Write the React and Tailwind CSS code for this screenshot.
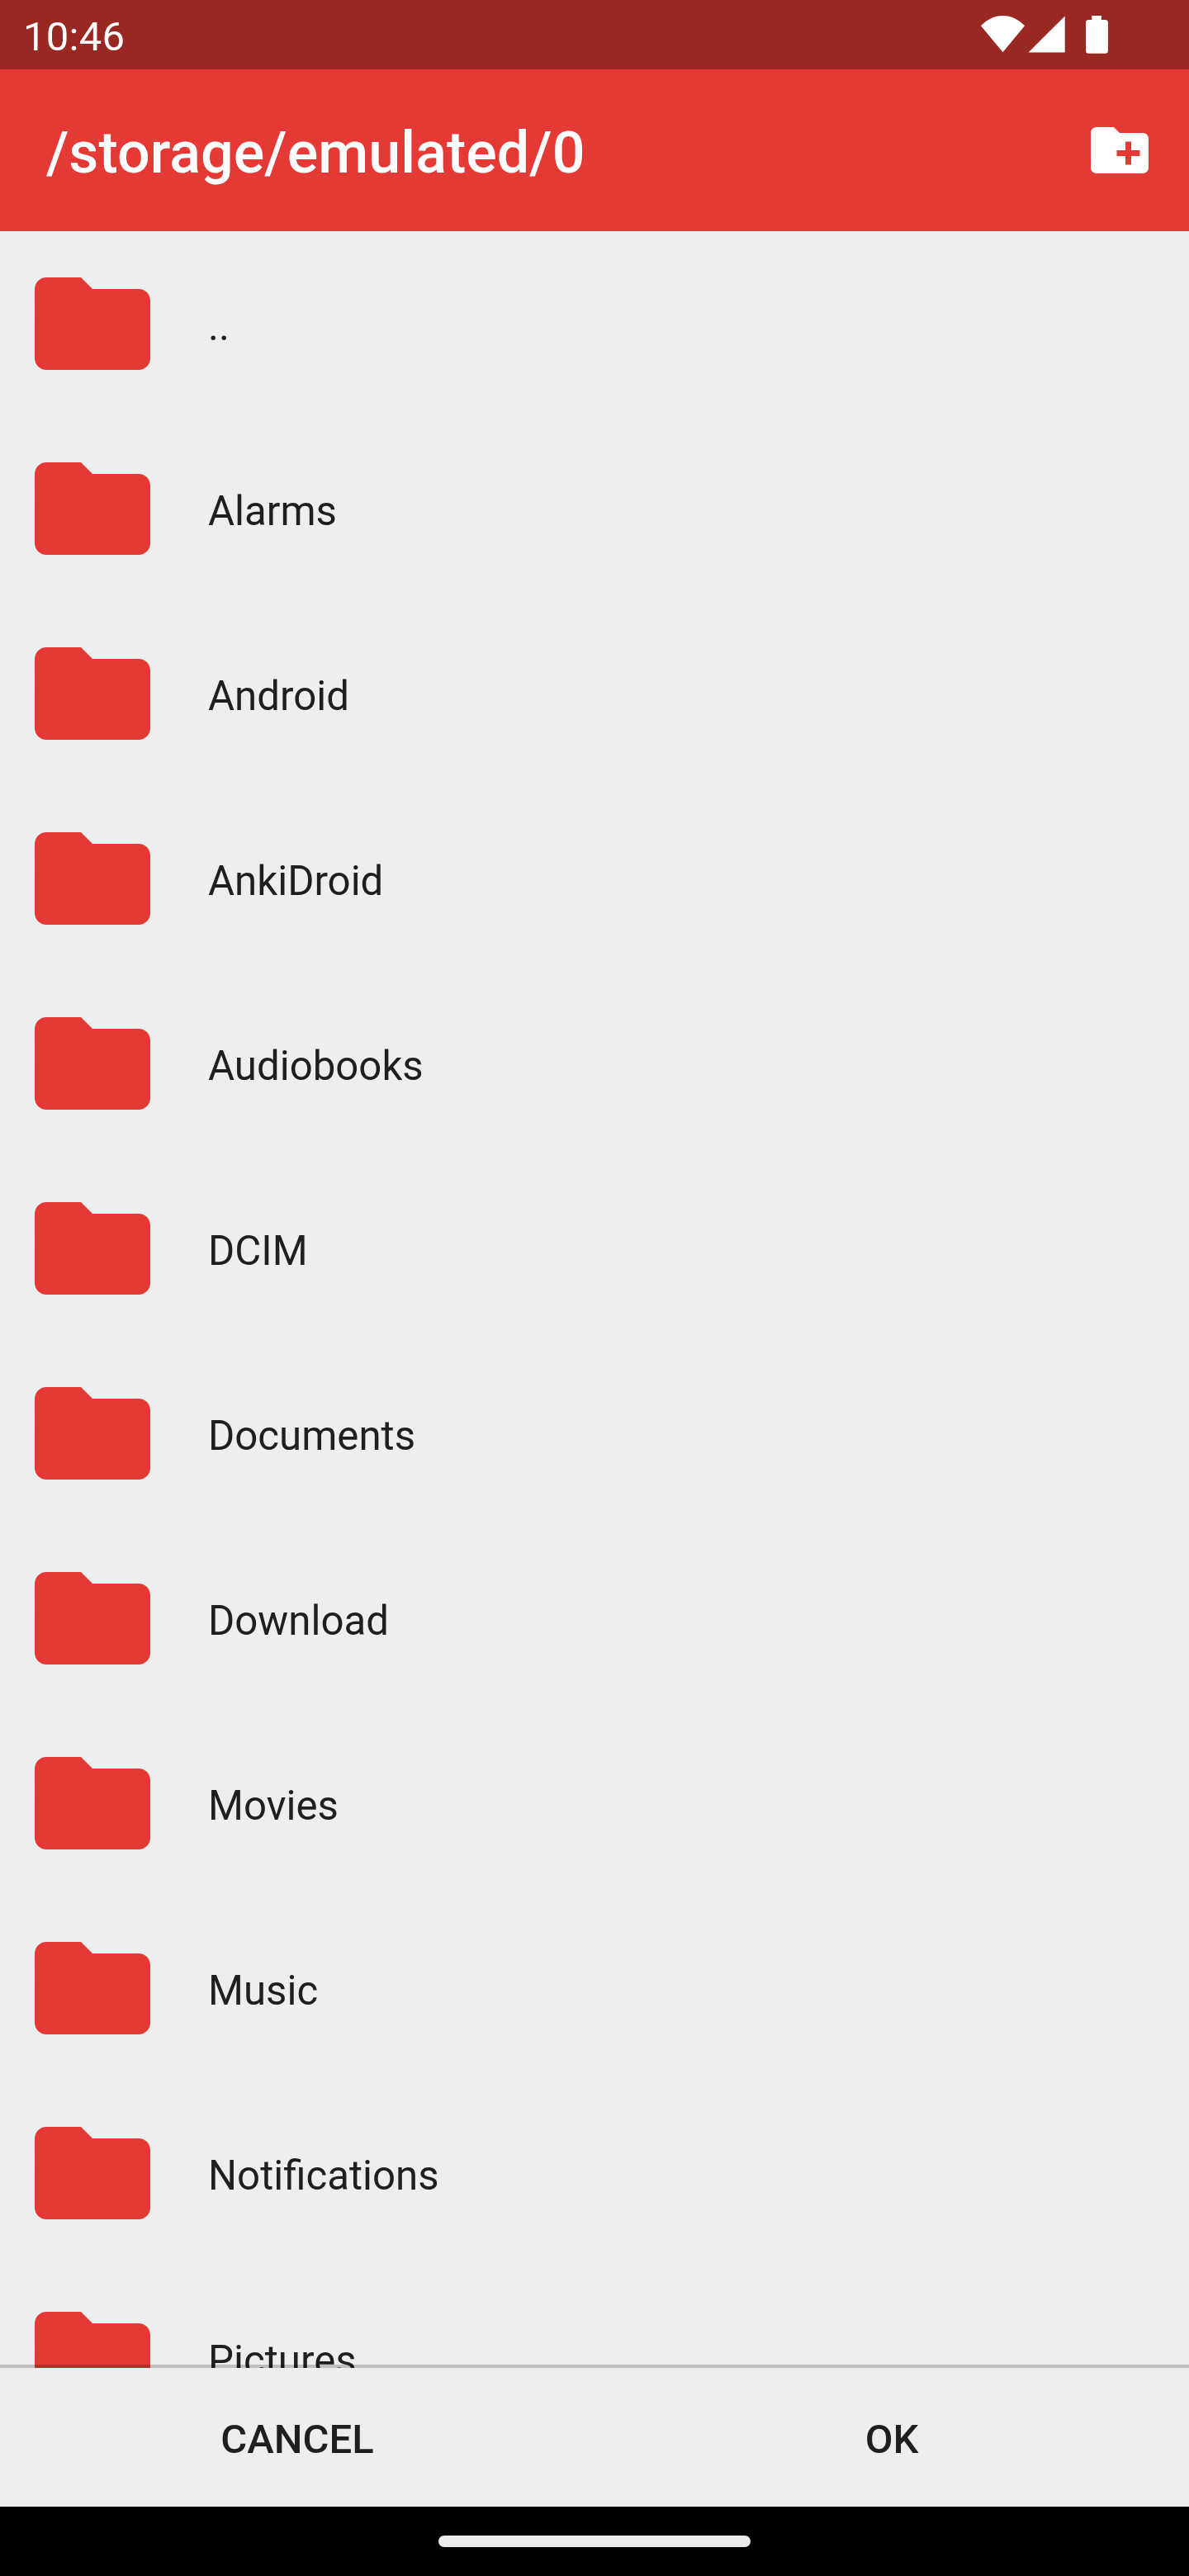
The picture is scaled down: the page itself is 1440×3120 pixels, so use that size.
const folders = [
  "..", "Alarms", "Android", "AnkiDroid", "Audiobooks", "DCIM",
  "Documents", "Download", "Movies", "Music", "Notifications", "Pictures",
];

function StatusBar() {
  return (
    <div className="flex h-[84px] shrink-0 items-center justify-between bg-[#992822] pl-7 text-white">
      <span className="pt-1.5 text-[49px] leading-[58px] tracking-[0.25px]">10:46</span>
      <svg className="h-[84px] w-[280px]" viewBox="1160 0 280 84" fill="currentColor">
        <path d="M1188 31.3C1195.500 23.500 1204.500 19 1214.500 19s19 4.500 26.500 12.300L1214.500 63.300z" />
        <path d="M1289.700 19.500v44H1245.500z" />
        <path d="M1322.300 19h11.700v5h4.500a3.500 3.500 0 0 1 3.500 3.500v33.700a3.500 3.500 0 0 1-3.500 3.500h-20a3.500 3.500 0 0 1-3.500-3.500V27.500a3.500 3.500 0 0 1 3.500-3.500h3.800z" />
      </svg>
    </div>
  );
}

function FolderIcon() {
  return (
    <svg className="size-[168px] shrink-0" viewBox="0 0 24 24" fill="#e53935">
      <path d="M10 4H4c-1.100 0-1.990.9-1.990 2L2 18c0 1.100.9 2 2 2h16c1.100 0 2-.9 2-2V8c0-1.100-.9-2-2-2h-8l-2-2z" />
    </svg>
  );
}

function Toolbar() {
  return (
    <header className="flex h-[196px] shrink-0 items-center justify-between bg-[#e53935] pl-14 pr-[42px] text-white">
      <h1 className="pt-1.5 text-[70px] font-medium leading-[82px] tracking-[0.05px]">/storage/emulated/0</h1>
      <button aria-label="New folder" className="size-[84px]">
        <svg className="size-[84px]" viewBox="0 0 24 24" fill="currentColor">
          <path d="M20 6h-8l-2-2H4c-1.110 0-1.990.89-1.990 2L2 18c0 1.110.89 2 2 2h16c1.110 0 2-.89 2-2V8c0-1.110-.89-2-2-2zm-1 8h-3v3h-2v-3h-3v-2h3V9h2v3h3v2z" />
        </svg>
      </button>
    </header>
  );
}

export default function App() {
  return (
    <div className="flex h-[3120px] w-[1440px] flex-col overflow-hidden bg-[#eeeeee] font-['Roboto',sans-serif] text-[#1f1f1f]">
      <StatusBar />
      <Toolbar />
      <main className="relative min-h-0 flex-1 overflow-hidden">
        <ul>
          {folders.map((name) => (
            <li key={name} className="flex h-56 items-center gap-14 px-7">
              <FolderIcon />
              <span className="pt-1.5 text-[49.2px] leading-[58px]">{name}</span>
            </li>
          ))}
        </ul>
        <div className="absolute inset-x-0 bottom-0 h-1 bg-black/20" />
      </main>
      <footer className="grid h-[168px] shrink-0 grid-cols-2 text-[49px] font-medium leading-[58px]">
        <button className="pt-1.5">CANCEL</button>
        <button className="pt-1.5">OK</button>
      </footer>
      <nav className="flex h-[84px] shrink-0 items-center justify-center bg-black">
        <div className="h-3.5 w-[378px] rounded-full bg-[#ebebeb]" />
      </nav>
    </div>
  );
}
